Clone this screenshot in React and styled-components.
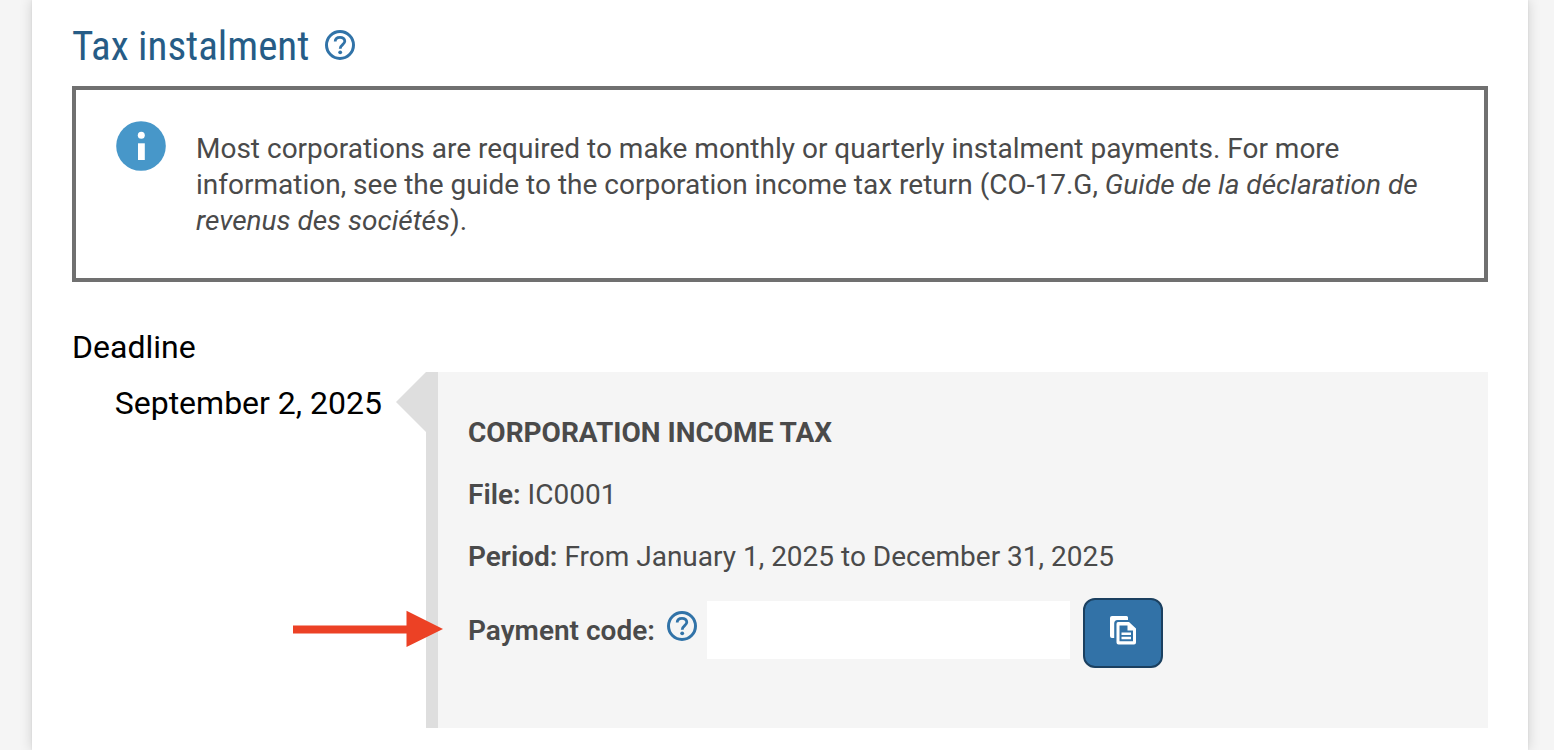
import React from "react";
import styled, { createGlobalStyle } from "styled-components";

const GlobalStyle = createGlobalStyle`
  * { box-sizing: border-box; }
  body {
    margin: 0;
    background: #f5f5f5;
    color: #4a4a4a;
    font-family: Roboto, "Liberation Sans", sans-serif;
    font-size: 28px;
    line-height: 36px;
  }
  h1, h2, h3, p { margin: 0; }
`;

const Sheet = styled.main`
  margin: 0 26px 0 32px;
  min-height: 100vh;
  padding: 22px 40px;
  background: #fff;
  box-shadow: 0 0 12px rgba(0, 0, 0, 0.16), 0 0 2px rgba(0, 0, 0, 0.08);
`;

const TitleRow = styled.div`
  display: flex;
  align-items: center;
  gap: 16px;
  margin-bottom: 18px;
`;

const Title = styled.h1`
  padding-top: 2px;
  color: #265c86;
  font-family: "Roboto Condensed", Roboto, sans-serif;
  font-size: 41px;
  font-weight: 400;
  line-height: 44px;
`;

const IconButton = styled.button`
  display: flex;
  flex: none;
  padding: 0;
  border: 0;
  background: none;
  color: #3173a8;
  cursor: pointer;
`;

const Notice = styled.section`
  display: flex;
  align-items: flex-start;
  gap: 30px;
  padding: 31px 40px 39px;
  border: 4px solid #707070;
`;

const NoticeText = styled.p`
  padding-top: 10px;
`;

const NoticeIcon = styled.svg`
  flex: none;
  width: 50px;
  height: 50px;
`;

const Heading = styled.h2`
  margin-top: 45px;
  color: #000;
  font-size: 32px;
  font-weight: 400;
  line-height: 40px;
`;

const Timeline = styled.section`
  display: grid;
  grid-template-columns: 310px 44px 1fr;
  margin-top: 5px;
`;

const DateLabel = styled.p`
  padding-top: 11px;
  color: #000;
  font-size: 32px;
  line-height: 40px;
  text-align: right;
  white-space: nowrap;
`;

const Pointer = styled.span`
  justify-self: end;
  width: 30px;
  height: 60px;
  background: #dedede;
  clip-path: polygon(100% 0, 100% 100%, 0 50%);
`;

const Card = styled.article`
  display: flex;
  flex-direction: column;
  gap: 26px;
  padding: 43px 30px 60px;
  border-left: 12px solid #dedede;
  background: #f5f5f5;
`;

const CardTitle = styled.h3`
  font-size: 28px;
  font-weight: 700;
  line-height: 36px;
`;

const Term = styled.strong`
  font-weight: 600;
`;

const PaymentRow = styled.div`
  position: relative;
  display: flex;
  align-items: flex-start;
  gap: 13px;
  margin-top: -3px;
`;

const Field = styled.div`
  display: flex;
  align-items: center;
  gap: 10px;
  height: 64px;
`;

const LabelGroup = styled.div`
  display: flex;
  align-items: flex-start;
  gap: 12px;
`;

const FieldLabel = styled.label`
  padding-top: 2px;
  font-weight: 600;
  white-space: nowrap;
`;

const CodeInput = styled.input`
  width: 363px;
  height: 58px;
  padding: 0 16px;
  border: 0;
  background: #fff;
  color: inherit;
  font: inherit;
`;

const CopyButton = styled.button`
  display: flex;
  align-items: center;
  justify-content: center;
  width: 80px;
  height: 70px;
  padding: 0 0 6px;
  border: 2px solid #1b4060;
  border-radius: 12px;
  background: #3272a7;
  color: #fff;
  cursor: pointer;
`;

const Arrow = styled.svg`
  position: absolute;
  right: calc(100% + 25px);
  top: 12px;
  width: 151px;
  height: 38px;
`;

function Help({ label }) {
  return (
    <IconButton type="button" aria-label={label}>
      <svg width="30" height="30" viewBox="0 0 30 30" fill="none" stroke="currentColor" aria-hidden="true">
        <circle cx="15" cy="15" r="13.500" strokeWidth="3" />
        <path d="M10.200 11.500C10.200 8.800 12.200 7.300 15 7.300C17.800 7.300 19.800 9 19.800 11.300C19.800 14.600 15.200 14.800 15.200 18.800" strokeWidth="2.800" />
        <circle cx="15.200" cy="22.300" r="1.900" fill="currentColor" stroke="none" />
      </svg>
    </IconButton>
  );
}

export default function App() {
  return (
    <>
      <GlobalStyle />
      <Sheet>
        <TitleRow>
          <Title>Tax instalment</Title>
          <Help label="Help about tax instalments" />
        </TitleRow>
        <Notice>
          <NoticeIcon viewBox="0 0 50 50" aria-hidden="true">
            <circle cx="25" cy="25" r="24.800" fill="#4797c9" />
            <circle cx="25.300" cy="14.300" r="3.500" fill="#fff" />
            <path d="M22 22.300h6.800V39H22z" fill="#fff" />
          </NoticeIcon>
          <NoticeText>
            Most corporations are required to make monthly or quarterly instalment payments. For more
            information, see the guide to the corporation income tax return (CO-17.G,{" "}
            <em lang="fr">Guide de la déclaration de revenus des sociétés</em>).
          </NoticeText>
        </Notice>
        <Heading>Deadline</Heading>
        <Timeline>
          <DateLabel>September 2, 2025</DateLabel>
          <Pointer />
          <Card>
            <CardTitle>CORPORATION INCOME TAX</CardTitle>
            <p><Term>File:</Term> IC0001</p>
            <p><Term>Period:</Term> From January 1, 2025 to December 31, 2025</p>
            <PaymentRow>
              <Arrow viewBox="0 0 151 38" aria-hidden="true">
                <path d="M1 15.500H114.500V0.800L151 19 114.500 37V23.500H1z" fill="#ec4125" />
              </Arrow>
              <Field>
                <LabelGroup>
                  <FieldLabel htmlFor="payment-code">Payment code:</FieldLabel>
                  <Help label="Help about the payment code" />
                </LabelGroup>
                <CodeInput id="payment-code" type="text" />
              </Field>
              <CopyButton type="button" aria-label="Copy payment code">
                <svg width="26" height="29" viewBox="0 0 26 29" aria-hidden="true">
                  <path d="M2 0H16.500Q18 0 18 1.500V4H7.500Q4.200 4 4.200 7.500V22H2Q0 22 0 20V2Q0 0 2 0z" fill="currentColor" />
                  <path fillRule="evenodd" fill="currentColor" d="M8 6H19L26 12.500V26.500Q26 28.500 24 28.500H8.500Q6.500 28.500 6.500 26.500V8Q6.500 6 8 6zM9.500 9.500V25.300H23V14.500H17.500V9.500z" />
                  <path d="M11.500 16.500H21v2.500H11.500zM11.500 20.800H21v2.500H11.500z" fill="currentColor" />
                </svg>
              </CopyButton>
            </PaymentRow>
          </Card>
        </Timeline>
      </Sheet>
    </>
  );
}
